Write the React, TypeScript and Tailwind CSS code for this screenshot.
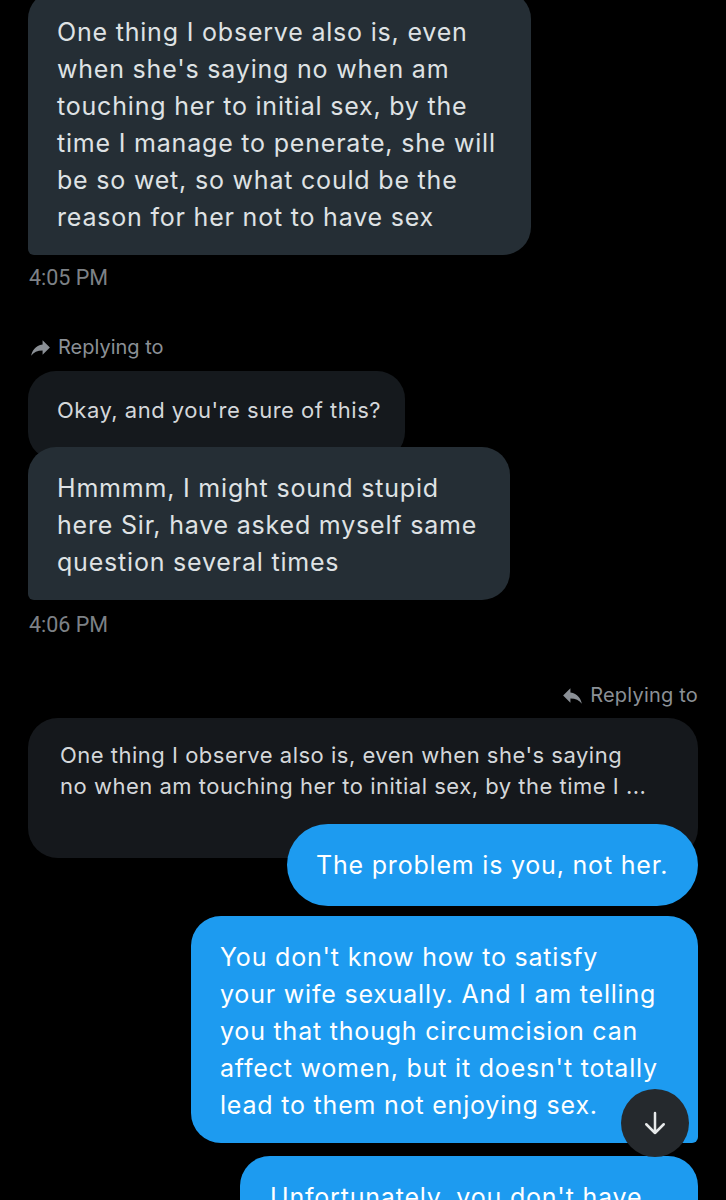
import React from 'react';

const ReplyIcon: React.FC<{ flip?: boolean }> = ({ flip }) => (
  <svg
    viewBox="0 0 24 24"
    className={`w-[25px] h-[25px] fill-[#8b9096] ${flip ? '-scale-x-100' : ''}`}
  >
    <path d="M10 9V5l-7 7 7 7v-4.1c5 0 8.5 1.6 11 5.1-1-5-4-10-11-11z" />
  </svg>
);

const Lines: React.FC<{ lines: string[] }> = ({ lines }) => (
  <>
    {lines.map((l, i) => (
      <div key={i} className="whitespace-nowrap">
        {l}
      </div>
    ))}
  </>
);

const App: React.FC = () => {
  return (
    <div className="relative h-[1200px] overflow-hidden bg-black px-[28px] font-['Inter',sans-serif] text-[25px] leading-[37px] tracking-[0.8px]">
      {/* Received block 1 */}
      <div className="-mt-[9px] w-[503px] rounded-[28px] rounded-bl-[6px] bg-[#252e35] pl-[29px] pt-[23px] pb-[19px] text-[#dfe2e4]">
        <Lines
          lines={[
            'One thing I observe also is, even',
            "when she's saying no when am",
            'touching her to initial sex, by the',
            'time I manage to penerate, she will',
            'be so wet, so what could be the',
            'reason for her not to have sex',
          ]}
        />
      </div>
      <div className="mt-[11px] pl-[1px] font-['Roboto',sans-serif] text-[21.5px] leading-[24px] tracking-normal text-[#7d8186]">
        4:05 PM
      </div>

      {/* Received block 2 */}
      <div className="mt-[45px] flex h-[24px] items-center gap-[5px] text-[20px] leading-[24px] tracking-[0px] text-[#8b9096]">
        <ReplyIcon flip />
        <span>Replying to</span>
      </div>
      <div className="mt-[12px] w-[377px] rounded-[28px] bg-[#15191d] pl-[29px] pt-[21px] pb-[31px] text-[22px] tracking-[0.5px] text-[#d4d7da]">
        Okay, and you're sure of this?
      </div>
      <div className="relative -mt-[13px] w-[482px] rounded-[28px] rounded-bl-[6px] bg-[#252e35] pl-[29px] pt-[23px] pb-[19px] text-[#dfe2e4]">
        <Lines
          lines={[
            'Hmmmm, I might sound stupid',
            'here Sir, have asked myself same',
            'question several times',
          ]}
        />
      </div>
      <div className="mt-[13px] pl-[1px] font-['Roboto',sans-serif] text-[21.5px] leading-[24px] tracking-normal text-[#7d8186]">
        4:06 PM
      </div>

      {/* Sent block */}
      <div className="mt-[46px] flex h-[24px] items-center justify-end gap-[5px] text-[20px] leading-[24px] tracking-[0.2px] text-[#8b9096]">
        <ReplyIcon />
        <span>Replying to</span>
      </div>
      <div className="mt-[11px] rounded-[30px] bg-[#15181c] pl-[32px] pt-[22px] pb-[56px] text-[22px] leading-[31px] tracking-[0.5px] text-[#d4d7da]">
        <Lines
          lines={[
            "One thing I observe also is, even when she's saying",
            'no when am touching her to initial sex, by the time I ...',
          ]}
        />
      </div>
      <div className="relative -mt-[34px] flex flex-col items-end gap-[10px] text-white">
        <div className="w-[411px] rounded-full bg-[#1d9bf0] pl-[29px] pt-[23px] pb-[22px]">
          The problem is you, not her.
        </div>
        <div className="w-[507px] rounded-[30px] rounded-br-[6px] bg-[#1d9bf0] pl-[29px] pt-[23px] pb-[19px]">
          <Lines
            lines={[
              "You don't know how to satisfy",
              'your wife sexually. And I am telling',
              'you that though circumcision can',
              "affect women, but it doesn't totally",
              'lead to them not enjoying sex.',
            ]}
          />
        </div>
        <div className="mt-[3px] w-[458px] rounded-[30px] bg-[#1d9bf0] pl-[30px] pt-[23px] pb-[19px]">
          <Lines lines={["Unfortunately, you don't have", 'the skills to make her enjoy it']} />
        </div>
      </div>

      {/* Scroll down button */}
      <button className="absolute left-[621px] top-[1089px] flex h-[68px] w-[68px] items-center justify-center rounded-full bg-[#25292d]">
        <svg viewBox="0 0 24 24" className="h-[30px] w-[30px] fill-none stroke-[#e7e9ea] stroke-[2]">
          <path d="M12 4v16M5 13l7 7 7-7" strokeLinecap="round" strokeLinejoin="round" />
        </svg>
      </button>
    </div>
  );
};

export default App;
